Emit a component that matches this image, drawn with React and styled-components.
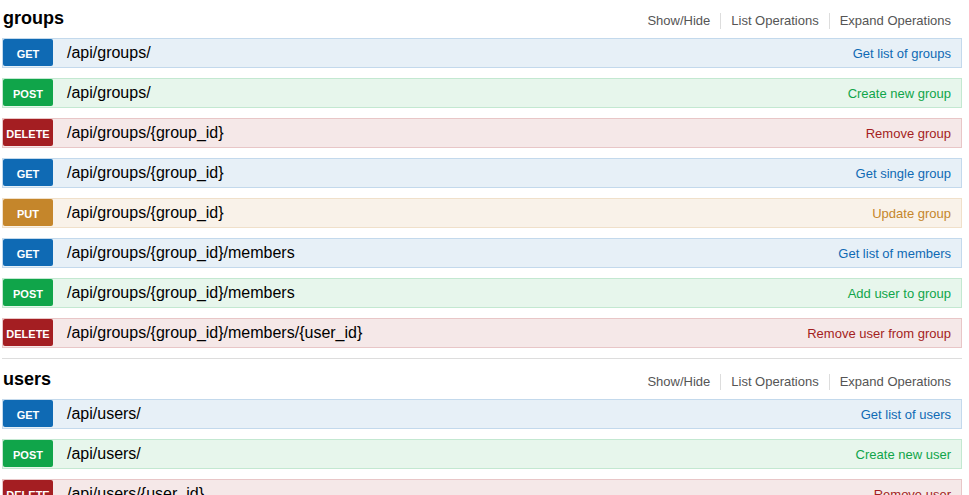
import React from 'react';
import styled, {createGlobalStyle} from 'styled-components';

const GlobalStyle = createGlobalStyle`
  body {
    margin: 0;
    background: #fff;
    font-family: "Liberation Sans", Arial, sans-serif;
  }
`

const methodColors = {
    get: {bg: '#e7f0f7', border: '#c3d9ec', main: '#0f6ab4'},
    post: {bg: '#e7f6ec', border: '#c3e8d1', main: '#10a54a'},
    put: {bg: '#f9f2e9', border: '#f0e0ca', main: '#c5862b'},
    delete: {bg: '#f5e8e8', border: '#e8c6c7', main: '#a41e22'},
}

const Page = styled.div`
  padding: 0 7px 0 2px;
`

const Section = styled.section`
  padding: 8px 0 10px;
  border-bottom: 1px solid #ddd;
  margin-bottom: 2px;
`

const Header = styled.div`
  display: flex;
  justify-content: space-between;
  align-items: baseline;
  margin-bottom: 10px;
`

const Title = styled.h2`
  margin: 0 0 0 1px;
  font-size: 18px;
  line-height: 20px;
  font-weight: bold;
  color: #000;
`

const Options = styled.ul`
  display: flex;
  list-style: none;
  margin: 0 11px 0 0;
  padding: 0;
  position: relative;
  top: 1px;
`

const Option = styled.li`
  font-size: 13px;
  line-height: 16px;
  color: #555;
  padding: 0 10px;
  border-right: 1px solid #ddd;

  &:last-child {
    padding-right: 0;
    border-right: none;
  }
`

const Operations = styled.div`
  display: flex;
  flex-direction: column;
  gap: 10px;
`

const Operation = styled.div`
  display: flex;
  align-items: center;
  height: 28px;
  background: ${p => methodColors[p.$method].bg};
  border: 1px solid ${p => methodColors[p.$method].border};
`

const Method = styled.span`
  align-self: flex-start;
  box-sizing: border-box;
  width: 50px;
  height: 27px;
  padding-top: 3px;
  line-height: 24px;
  text-align: center;
  font-size: 11px;
  font-weight: bold;
  text-transform: uppercase;
  color: #fff;
  border-radius: 2px;
  background: ${p => methodColors[p.$method].main};
`

const Path = styled.span`
  flex: 1;
  padding-left: 14px;
  font-size: 16px;
  color: #000;
`

const Summary = styled.span`
  padding-right: 10px;
  font-size: 13px;
  color: ${p => methodColors[p.$method].main};
`

const resources = [
    {
        name: 'groups',
        ops: [
            ['get', '/api/groups/', 'Get list of groups'],
            ['post', '/api/groups/', 'Create new group'],
            ['delete', '/api/groups/{group_id}', 'Remove group'],
            ['get', '/api/groups/{group_id}', 'Get single group'],
            ['put', '/api/groups/{group_id}', 'Update group'],
            ['get', '/api/groups/{group_id}/members', 'Get list of members'],
            ['post', '/api/groups/{group_id}/members', 'Add user to group'],
            ['delete', '/api/groups/{group_id}/members/{user_id}', 'Remove user from group'],
        ],
    },
    {
        name: 'users',
        ops: [
            ['get', '/api/users/', 'Get list of users'],
            ['post', '/api/users/', 'Create new user'],
            ['delete', '/api/users/{user_id}', 'Remove user'],
        ],
    },
]

const App = () => {
    return (
        <Page>
            <GlobalStyle/>
            {resources.map(res => (
                <Section key={res.name}>
                    <Header>
                        <Title>{res.name}</Title>
                        <Options>
                            <Option>Show/Hide</Option>
                            <Option>List Operations</Option>
                            <Option>Expand Operations</Option>
                        </Options>
                    </Header>
                    <Operations>
                        {res.ops.map(([method, path, summary], i) => (
                            <Operation key={i} $method={method}>
                                <Method $method={method}>{method}</Method>
                                <Path>{path}</Path>
                                <Summary $method={method}>{summary}</Summary>
                            </Operation>
                        ))}
                    </Operations>
                </Section>
            ))}
        </Page>
    );
}

export default App;
